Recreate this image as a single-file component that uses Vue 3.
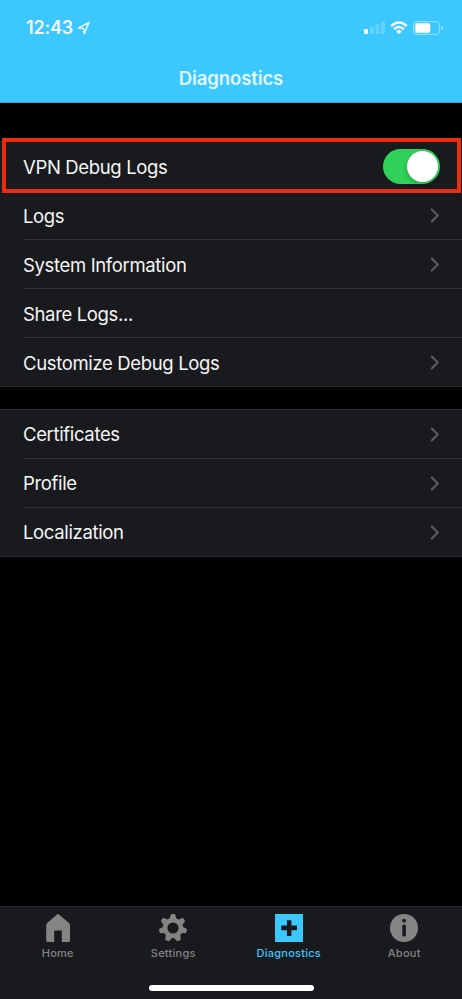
<script setup>
const groups = [
  [
    { label: 'VPN Debug Logs', type: 'toggle' },
    { label: 'Logs', type: 'link' },
    { label: 'System Information', type: 'link' },
    { label: 'Share Logs...', type: 'action' },
    { label: 'Customize Debug Logs', type: 'link' },
  ],
  [
    { label: 'Certificates', type: 'link' },
    { label: 'Profile', type: 'link' },
    { label: 'Localization', type: 'link' },
  ],
]
const tabs = ['Home', 'Settings', 'Diagnostics', 'About']
const teeth = Array.from({ length: 7 }, (_, i) => `rotate(${(i * 360) / 7} 14 14)`)
</script>

<template>
  <div class="screen">
    <header class="header">
      <div class="status">
        <div class="clock">
          <span class="time">12:43</span>
          <svg class="location" width="14" height="14" viewBox="0 0 14 14">
            <path d="M1.2 7.1 11.9 1.5 7.3 12.8 6.6 7.4Z" />
          </svg>
        </div>
        <div class="indicators">
          <svg width="21" height="14" viewBox="0 0 21 14" fill="#fff">
            <rect x="0" y="8" width="4" height="5" rx="1" />
            <g opacity=".2">
              <rect x="6" y="6" width="4" height="7" rx="1" />
              <rect x="11.5" y="3.4" width="4" height="9.6" rx="1" />
              <rect x="17" y="0.5" width="4" height="12.5" rx="1" />
            </g>
          </svg>
          <svg class="wifi" width="18" height="14" viewBox="0 0 18 14">
            <path d="M1.2 5.1Q9-2.1 16.8 5.1M4 8.2Q9 3.7 14 8.2" fill="none" stroke="#fff" stroke-width="2.4" />
            <path d="M6.1 10.3Q9 7.8 11.9 10.3L9 13.2Z" fill="#fff" />
          </svg>
          <svg class="battery" width="30" height="14" viewBox="0 0 30 14">
            <rect x=".6" y=".6" width="25.8" height="12.8" rx="3.7" fill="none" stroke="#fff" stroke-opacity=".42" stroke-width="1.2" />
            <rect x="2.3" y="2.2" width="15" height="9.6" rx="2" fill="#fff" />
            <path d="M28 5Q30 5.6 30 7T28 9Z" fill="#fff" fill-opacity=".45" />
          </svg>
        </div>
      </div>
      <h1 class="title">Diagnostics</h1>
    </header>

    <main class="content">
      <section v-for="(rows, g) in groups" :key="g" class="group">
        <div v-for="row in rows" :key="row.label" class="row" :class="{ marked: row.type === 'toggle' }">
          <div class="cell">
            <span class="label">{{ row.label }}</span>
            <span v-if="row.type === 'toggle'" class="toggle"><span class="knob"></span></span>
            <svg v-else-if="row.type === 'link'" class="chevron" width="10" height="15" viewBox="0 0 10 15">
              <path d="M1.8 1.5 7.8 7.5 1.8 13.5" />
            </svg>
          </div>
        </div>
      </section>
    </main>

    <nav class="tabbar">
      <div class="tabs">
        <div v-for="tab in tabs" :key="tab" class="tab" :class="{ active: tab === 'Diagnostics' }">
          <svg width="28" height="28" viewBox="0 0 28 28">
            <path
              v-if="tab === 'Home'"
              fill="currentColor"
              d="M13 .4Q14 -.3 15 .4L24.8 8.7Q26 9.8 26 11.2V26.5Q26 28 24.5 28H17.8V16.6H10.2V28H3.7Q2.2 28 2.2 26.5V11.2Q2.2 9.8 3.4 8.7Z"
            />
            <g v-else-if="tab === 'Settings'">
              <circle cx="14" cy="14" r="7.8" fill="none" stroke="currentColor" stroke-width="4.4" />
              <path
                v-for="t in teeth"
                :key="t"
                :transform="t"
                fill="currentColor"
                d="M8.8 6.3Q11.2 5 11.6 1.2Q11.7 0 12.8 0H15.2Q16.3 0 16.4 1.2Q16.8 5 19.2 6.3L14 7.8Z"
              />
            </g>
            <g v-else-if="tab === 'Diagnostics'">
              <path fill="currentColor" d="M0 0H28V28H0Z" />
              <path fill="#191a1d" d="M11.9 6.2H16.4V11.6H22V16.2H16.4V22H11.9V16.2H6.3V11.6H11.9Z" />
            </g>
            <g v-else>
              <circle cx="14" cy="14" r="14" fill="currentColor" />
              <circle cx="14.1" cy="6.6" r="1.9" fill="#191a1d" />
              <rect x="12.3" y="10.6" width="3.6" height="12" rx="1.5" fill="#191a1d" />
            </g>
          </svg>
          <span class="tab-label">{{ tab }}</span>
        </div>
      </div>
      <div class="home-indicator"></div>
    </nav>
  </div>
</template>

<style>
body {
  background: #000;
}
</style>

<style scoped>
.screen {
  box-sizing: border-box;
  width: 462px;
  height: 999px;
  display: flex;
  flex-direction: column;
  background: #000;
  color: #f5f5f5;
  font-family: Inter, 'Liberation Sans', sans-serif;
  overflow: hidden;
}
.header {
  box-sizing: border-box;
  height: 103px;
  background: #3cc8ff;
  border-bottom: 1px solid #329fc9;
}
.status {
  box-sizing: border-box;
  height: 56px;
  padding: 0 19px 0 26px;
  display: flex;
  justify-content: space-between;
  align-items: center;
}
.clock {
  display: flex;
  align-items: center;
  gap: 4px;
}
.time {
  font-size: 18px;
  line-height: 22px;
  font-weight: 600;
  letter-spacing: -0.2px;
}
.location {
  fill: none;
  stroke: #eaf9ff;
  stroke-width: 1.5;
  stroke-linejoin: round;
}
.indicators {
  display: flex;
  align-items: center;
}
.wifi {
  margin-left: 5px;
}
.battery {
  margin-left: 5px;
}
.title {
  margin: 11px 0 0;
  font-size: 18.5px;
  line-height: 23px;
  font-weight: 600;
  text-align: center;
  letter-spacing: -0.1px;
  color: #e2f8ff;
}
.content {
  flex: 1;
  padding-top: 38px;
}
.group {
  background: #191a1d;
  border-top: 1px solid #2b2c2f;
  border-bottom: 1px solid #2b2c2f;
  margin-bottom: 22px;
}
.row {
  padding-left: 23px;
}
.cell {
  box-sizing: border-box;
  height: 49px;
  padding-right: 22px;
  display: flex;
  align-items: center;
  justify-content: space-between;
  border-bottom: 1px solid #2f3033;
}
.group:first-child .cell {
  padding-top: 2px;
}
.row:last-child .cell {
  height: 48px;
  border-bottom: 0;
}
.group:first-child .chevron {
  margin-top: -1px;
}
.label {
  font-size: 18.5px;
  line-height: 24px;
  letter-spacing: -0.35px;
}
.row.marked {
  box-sizing: border-box;
  height: 55px;
  margin: -4px 1px -2px 2px;
  padding: 0 0 0 17px;
  border: 4px solid #ed2d12;
  background: #191a1d;
  position: relative;
}
.row.marked .cell {
  height: 47px;
  padding-right: 17px;
  border: 0;
}
.toggle {
  box-sizing: border-box;
  width: 57px;
  height: 35px;
  padding: 2px;
  display: flex;
  justify-content: flex-end;
  border-radius: 18px;
  background: #30d158;
}
.knob {
  width: 31px;
  height: 31px;
  border-radius: 50%;
  background: #fff;
  box-shadow: -1px 2px 4px rgba(0, 0, 0, 0.18);
}
.chevron {
  fill: none;
  stroke: #5b5c60;
  stroke-width: 2.2;
  stroke-linecap: round;
  stroke-linejoin: round;
}
.tabbar {
  box-sizing: border-box;
  height: 93px;
  padding-top: 7px;
  background: #191a1d;
  border-top: 1px solid #242528;
}
.tabs {
  display: grid;
  grid-template-columns: repeat(4, 1fr);
}
.tab {
  display: flex;
  flex-direction: column;
  align-items: center;
  color: #838483;
}
.tab-label {
  margin-top: 4px;
  font-size: 11px;
  line-height: 14px;
  font-weight: 500;
  letter-spacing: 0.25px;
}
.tab.active {
  color: #3cc8ff;
}
.home-indicator {
  width: 165px;
  height: 6px;
  margin: 25px auto 0;
  border-radius: 3px;
  background: #fff;
}
</style>
